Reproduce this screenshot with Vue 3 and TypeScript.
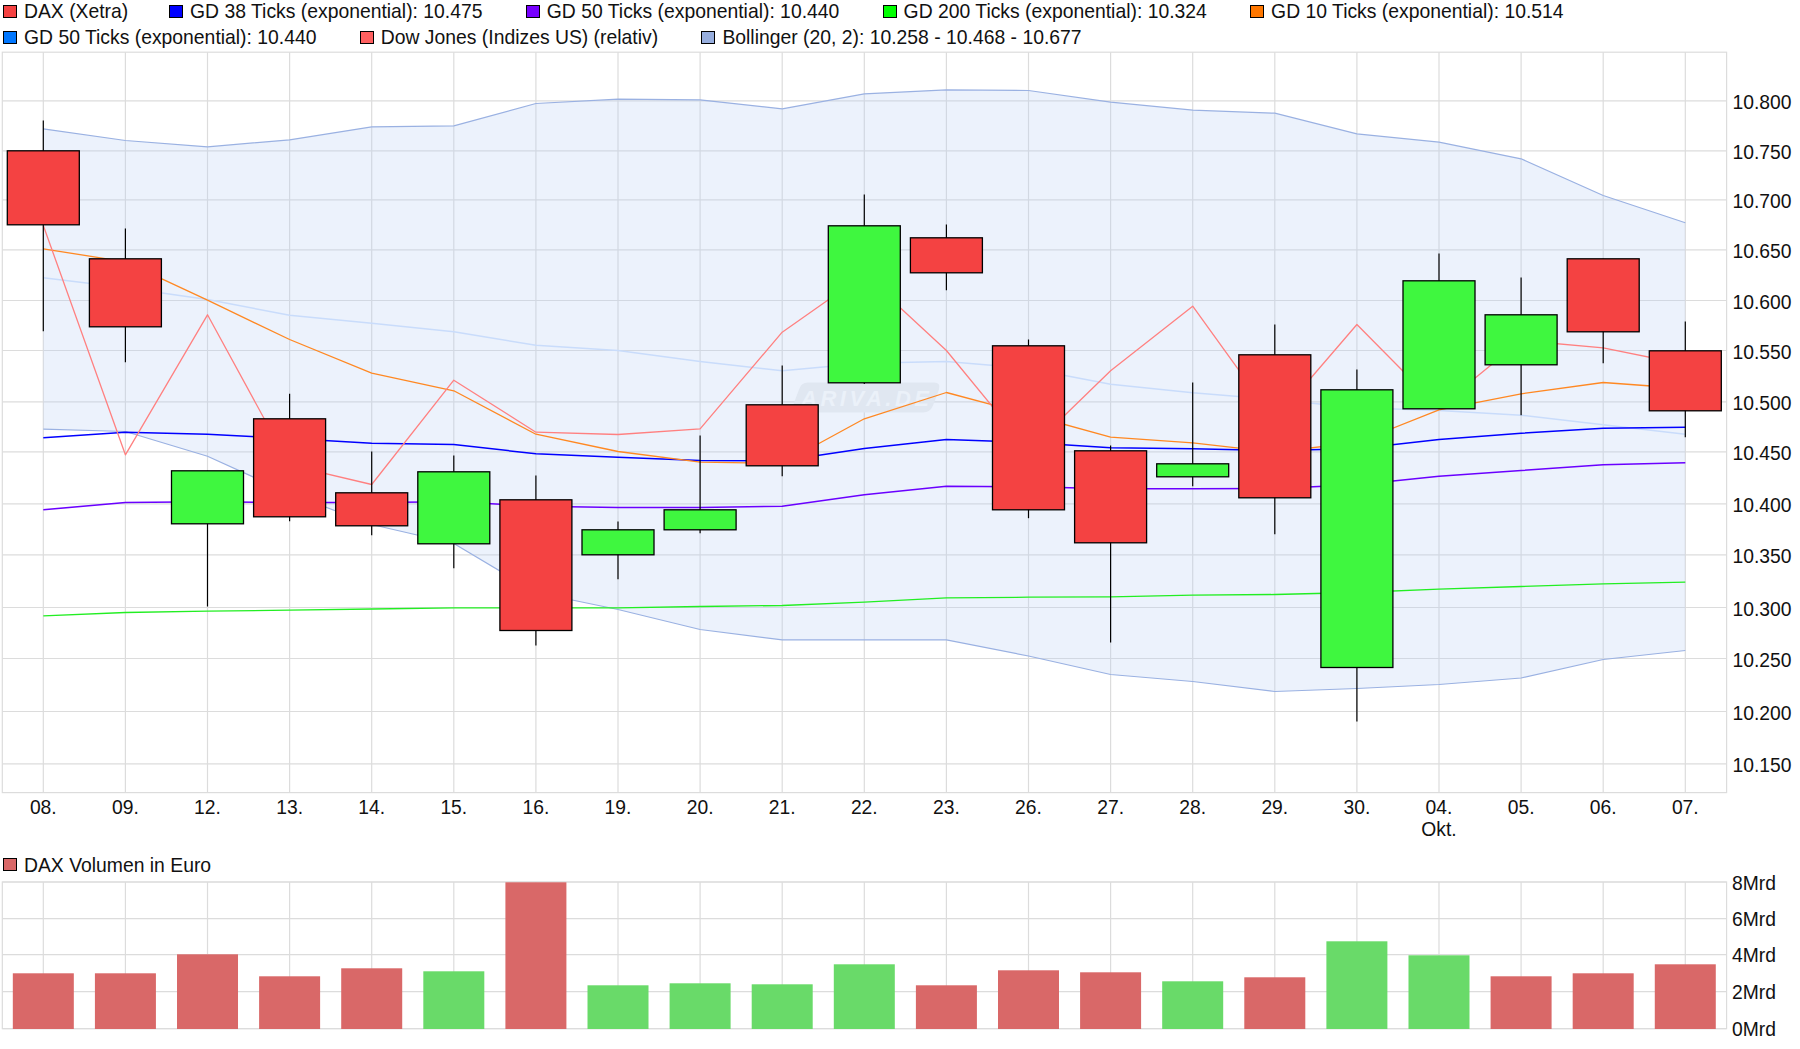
<script setup lang="ts">
interface LegendItem { label: string; color: string }
interface Candle { hi: number; top: number; bot: number; lo: number; up: boolean }
interface Line { color: string; width: number; ys: number[] }

const legend: LegendItem[] = [
  { label: 'DAX (Xetra)', color: '#f44242' },
  { label: 'GD 38 Ticks (exponential): 10.475', color: '#0000ff' },
  { label: 'GD 50 Ticks (exponential): 10.440', color: '#7700ff' },
  { label: 'GD 200 Ticks (exponential): 10.324', color: '#00ff00' },
  { label: 'GD 10 Ticks (exponential): 10.514', color: '#ff7700' },
  { label: 'GD 50 Ticks (exponential): 10.440', color: '#0077ff' },
  { label: 'Dow Jones (Indizes US) (relativ)', color: '#ff6060' },
  { label: 'Bollinger (20, 2): 10.258 - 10.468 - 10.677', color: '#97aede' }
]

const xs: number[] = Array.from({ length: 21 }, (_, i) => 43.3 + 82.1 * i)
const days = ['08.', '09.', '12.', '13.', '14.', '15.', '16.', '19.', '20.', '21.', '22.', '23.', '26.', '27.', '28.', '29.', '30.', '04.', '05.', '06.', '07.']

const yTicks = [
  { t: '10.800', y: 100.3 }, { t: '10.750', y: 150.3 }, { t: '10.700', y: 199.3 }, { t: '10.650', y: 249.3 },
  { t: '10.600', y: 300 }, { t: '10.550', y: 350 }, { t: '10.500', y: 401.3 }, { t: '10.450', y: 451.3 },
  { t: '10.400', y: 503.3 }, { t: '10.350', y: 554.3 }, { t: '10.300', y: 607 }, { t: '10.250', y: 658 },
  { t: '10.200', y: 711 }, { t: '10.150', y: 763.3 }
]
const volTicks = [
  { t: '8Mrd', y: 881.7 }, { t: '6Mrd', y: 918.3 }, { t: '4Mrd', y: 954.3 }, { t: '2Mrd', y: 991.3 }, { t: '0Mrd', y: 1028.3 }
]

const bbUpper = [128.3, 140, 146.3, 139.3, 126.3, 125.3, 103, 98.7, 99.3, 108.3, 93.3, 89.3, 90, 101.7, 109.7, 112.7, 133.3, 141.7, 158.3, 195, 222.3]
const bbLower = [428.7, 431, 455.7, 493, 524, 543, 592, 609, 629, 639.4, 639.4, 639.4, 655.5, 674, 681, 691, 688, 684, 677.5, 659, 650]

const lines: Line[] = [
  { color: '#c9dcfb', width: 1.5, ys: [277.3, 287.3, 299, 314.7, 322.7, 331.3, 344.7, 350, 361, 370.3, 362.7, 361, 368, 383.7, 392.3, 399, 407.3, 410, 414.7, 424.3, 433.7] },
  { color: '#9ab1e2', width: 1.2, ys: bbUpper },
  { color: '#9ab1e2', width: 1.2, ys: bbLower },
  { color: '#22ee22', width: 1.3, ys: [615.3, 612, 610.7, 609.6, 608.5, 607.3, 607.3, 607.3, 606, 605, 601.6, 597.3, 596.7, 596.3, 594.7, 594, 592, 588.7, 586, 583.3, 581.7] },
  { color: '#6a00ff', width: 1.5, ys: [509.3, 502, 501.3, 502, 502, 501.3, 505.7, 507, 507, 505.7, 494.3, 485.7, 486.3, 488.3, 488.3, 488, 484.3, 475.7, 470, 464.3, 462.3] },
  { color: '#0000ff', width: 1.5, ys: [437.3, 431.7, 433.7, 438, 442.7, 444, 453.3, 456.7, 460, 460.3, 448, 439, 442, 447.3, 448.3, 450, 448.3, 439, 432.7, 427.7, 426.7] },
  { color: '#ff8822', width: 1.3, ys: [248.3, 261.3, 299.7, 339, 372.7, 390.3, 433.7, 451, 461.7, 463, 418.3, 392, 414, 436.7, 442.3, 451.7, 442, 409.3, 393.3, 382, 388] },
  { color: '#ff8080', width: 1.3, ys: [225, 454.3, 314.3, 464.7, 484, 379.7, 431.7, 434, 428.3, 331.7, 274, 350, 450, 370.3, 305.7, 419.5, 324, 407, 340, 347.3, 364] }
]

const candles: Candle[] = [
  { hi: 120, top: 150.3, bot: 224.3, lo: 330.7, up: false },
  { hi: 228, top: 258.3, bot: 326.3, lo: 361.7, up: false },
  { hi: 470.3, top: 470.3, bot: 523.3, lo: 606, up: true },
  { hi: 393.3, top: 418.3, bot: 516.3, lo: 520.7, up: false },
  { hi: 451, top: 492.3, bot: 525.3, lo: 534.7, up: false },
  { hi: 455, top: 471.3, bot: 543.3, lo: 567.7, up: true },
  { hi: 475, top: 499.3, bot: 630, lo: 645, up: false },
  { hi: 521, top: 529.3, bot: 554.3, lo: 578.7, up: true },
  { hi: 435, top: 509.3, bot: 529.3, lo: 532.7, up: true },
  { hi: 365, top: 404.3, bot: 465.3, lo: 475.7, up: false },
  { hi: 194, top: 225.3, bot: 382.3, lo: 383.6, up: true },
  { hi: 224, top: 237.3, bot: 272.3, lo: 289.7, up: false },
  { hi: 339, top: 345.3, bot: 509.3, lo: 517.7, up: false },
  { hi: 445, top: 450.3, bot: 542.3, lo: 642, up: false },
  { hi: 382, top: 463.3, bot: 476.3, lo: 485.7, up: true },
  { hi: 324, top: 354.3, bot: 497.3, lo: 533.7, up: false },
  { hi: 369, top: 389.3, bot: 667, lo: 721, up: true },
  { hi: 253, top: 280.3, bot: 408.3, lo: 408.3, up: true },
  { hi: 277, top: 314.3, bot: 364.3, lo: 414.7, up: true },
  { hi: 258.3, top: 258.3, bot: 331.3, lo: 362.7, up: false },
  { hi: 321, top: 350.3, bot: 410.3, lo: 436.7, up: false }
]

const volumes: { top: number; up: boolean }[] = [
  { top: 973, up: false }, { top: 973, up: false }, { top: 954, up: false }, { top: 976, up: false },
  { top: 968, up: false }, { top: 971, up: true }, { top: 882, up: false }, { top: 985, up: true },
  { top: 983, up: true }, { top: 984, up: true }, { top: 964, up: true }, { top: 985, up: false },
  { top: 970, up: false }, { top: 972, up: false }, { top: 981, up: true }, { top: 977, up: false },
  { top: 941, up: true }, { top: 955, up: true }, { top: 976, up: false }, { top: 973, up: false },
  { top: 964, up: false }
]

const pts = (ys: number[]): string => ys.map((y, i) => `${xs[i]},${y}`).join(' ')
const band: string = pts(bbUpper) + ' ' + bbLower.map((y, i) => `${xs[i]},${y}`).reverse().join(' ')
</script>

<template>
  <div class="page">
    <div class="legend main-legend">
      <div v-for="(item, i) in legend" :key="i" class="legend-item">
        <span class="swatch" :style="{ background: item.color }"></span>
        <span>{{ item.label }}</span>
      </div>
    </div>

    <svg class="chart main" viewBox="0 46.5 1800 805" width="1800" height="805">
      <rect x="2.3" y="51.7" width="1724.3" height="740.4" fill="#fff" stroke="#dcdcdc" stroke-width="1.2" />
      <g stroke="#dcdcdc" stroke-width="1.2">
        <line v-for="t in yTicks" :key="t.t" x1="2.3" x2="1726.6" :y1="t.y" :y2="t.y" />
        <line v-for="x in xs" :key="x" :x1="x" :x2="x" y1="51.7" y2="792.1" />
      </g>
      <polygon :points="band" fill="#b8d0f5" fill-opacity="0.27" />

      <path d="M808 382H934Q941 382 939 389L933 405Q930 412 923 412H798Q791 412 793 405L799 389Q801 382 808 382Z" fill="#e0e7f1" />
      <text x="801" y="405" class="mark" textLength="128" lengthAdjust="spacing">ARIVA.DE</text>

      <polyline v-for="(l, i) in lines" :key="i" :points="pts(l.ys)" fill="none" :stroke="l.color" :stroke-width="l.width" stroke-linejoin="round" />

      <g v-for="(c, i) in candles" :key="i">
        <line :x1="xs[i]" :x2="xs[i]" :y1="c.hi" :y2="c.lo" stroke="#000" stroke-width="1.2" />
        <rect :x="xs[i] - 36" :y="c.top" width="72" :height="c.bot - c.top" :fill="c.up ? '#3ff73f' : '#f44242'" stroke="#000" stroke-width="1.3" />
      </g>

      <text v-for="t in yTicks" :key="t.t" x="1732.5" :y="t.y + 8.4" class="tick">{{ t.t }}</text>
      <text v-for="(d, i) in days" :key="i" :x="xs[i]" y="813" text-anchor="middle" class="tick">{{ d }}</text>
      <text :x="xs[17]" y="835.5" text-anchor="middle" class="tick">Okt.</text>
    </svg>

    <div class="legend vol-legend">
      <div class="legend-item">
        <span class="swatch" style="background: #d96868"></span>
        <span>DAX Volumen in Euro</span>
      </div>
    </div>

    <svg class="chart" viewBox="0 873.7 1800 175.3" width="1800" height="175.3">
      <rect x="2.3" y="881.7" width="1724.3" height="146.6" fill="#fff" stroke="#dcdcdc" stroke-width="1.2" />
      <g stroke="#dcdcdc" stroke-width="1.2">
        <line v-for="t in volTicks" :key="t.t" x1="2.3" x2="1726.6" :y1="t.y" :y2="t.y" />
        <line v-for="x in xs" :key="x" :x1="x" :x2="x" y1="881.7" y2="1028.3" />
      </g>
      <rect v-for="(v, i) in volumes" :key="i" :x="xs[i] - 30.5" :y="v.top" width="61" :height="1028.7 - v.top" :fill="v.up ? '#69da69' : '#d96868'" />
      <text v-for="t in volTicks" :key="t.t" x="1732" :y="t.y + 7.7" class="tick">{{ t.t }}</text>
    </svg>
  </div>
</template>

<style scoped>
.page {
  width: 1800px;
  height: 1049px;
  background: #fff;
  display: flex;
  flex-direction: column;
  overflow: hidden;
  font-family: "Liberation Sans", Arial, sans-serif;
  color: #111;
}
.legend {
  display: flex;
  flex-wrap: wrap;
  column-gap: 43.3px;
  row-gap: 4px;
  padding-left: 3px;
  box-sizing: border-box;
  font-size: 19.35px;
  flex: none;
}
.main-legend {
  height: 47px;
}
.main-legend .legend-item:first-child {
  margin-right: -2.5px;
}
.vol-legend {
  height: 22.3px;
  padding-top: 1.5px;
}
.legend-item {
  display: flex;
  align-items: center;
  gap: 7px;
  height: 22px;
  line-height: 22px;
  white-space: nowrap;
}
.swatch {
  width: 14px;
  height: 13px;
  box-sizing: border-box;
  border: 1.2px solid #000;
  flex: none;
}
.chart {
  display: block;
  flex: none;
}
.tick {
  font-family: "Liberation Sans", Arial, sans-serif;
  font-size: 19.3px;
  fill: #111;
}
.mark {
  font-family: "Liberation Sans", Arial, sans-serif;
  font-size: 22px;
  font-weight: bold;
  font-style: italic;
  fill: #ebf1f9;
}
</style>
